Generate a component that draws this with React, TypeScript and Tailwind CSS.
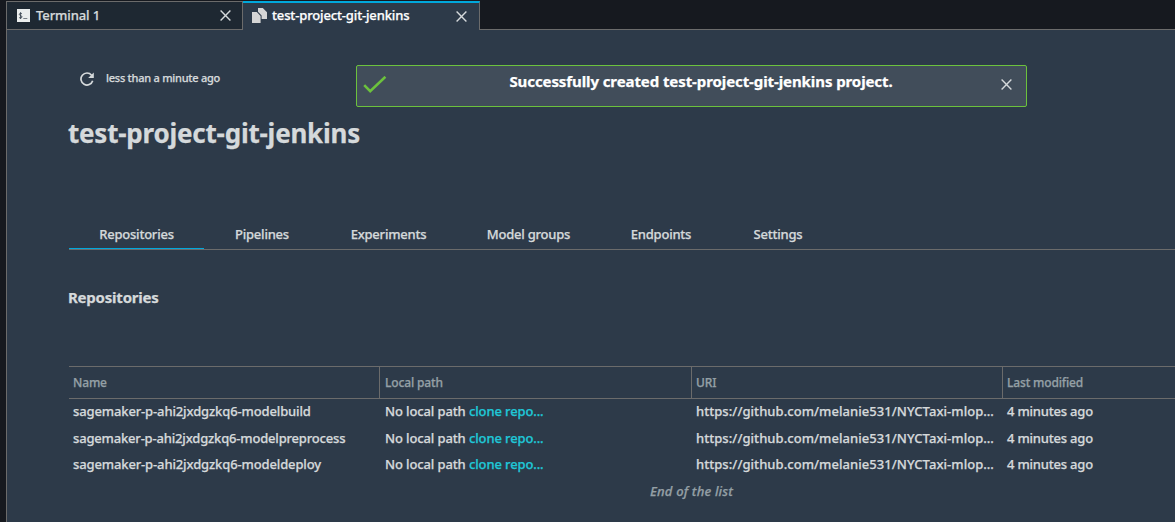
import type { ReactNode } from "react";

const tabs: { label: string; cls: string }[] = [
  { label: "Repositories", cls: "w-[135px] border-[#00a8dc]" },
  { label: "Pipelines", cls: "w-[116px] border-transparent" },
  { label: "Experiments", cls: "w-[137px] border-transparent" },
  { label: "Model groups", cls: "w-[143px] border-transparent" },
  { label: "Endpoints", cls: "w-[122px] border-transparent" },
  { label: "Settings", cls: "w-[112px] border-transparent" },
];

const repositories = [
  { name: "sagemaker-p-ahi2jxdgzkq6-modelbuild", height: "h-[25px]", nameTracking: "tracking-[-0.13px]" },
  { name: "sagemaker-p-ahi2jxdgzkq6-modelpreprocess", height: "h-[28px] pt-[2px]", nameTracking: "tracking-[-0.18px]" },
  { name: "sagemaker-p-ahi2jxdgzkq6-modeldeploy", height: "h-[25px]", nameTracking: "tracking-[-0.13px]" },
];

function CloseIcon({ className }: { className?: string }) {
  return (
    <svg viewBox="0 0 11 11" className={`size-[11px] shrink-0 ${className ?? ""}`} fill="none" stroke="#d5d9db" strokeWidth="1.4">
      <path d="M0.6 0.6 10.4 10.4M10.4 0.6 0.6 10.4" />
    </svg>
  );
}

function TerminalIcon() {
  return (
    <svg viewBox="0 0 13 13" className="size-[13px] shrink-0">
      <rect width="13" height="13" fill="#eaeded" />
      <path d="M5 4.9C4.6 4.2 2.3 4 2.3 5.4 2.3 6.8 5 6.3 5 7.9 5 9.3 2.4 9.1 2 8.3M3.6 3.2V10" fill="none" stroke="#37424e" strokeWidth="0.9" />
      <path d="M6.3 9.5H10.3" stroke="#6b737b" strokeWidth="0.9" />
    </svg>
  );
}

function ProjectIcon() {
  return (
    <svg viewBox="0 0 15 15" className="-mt-[2px] size-[15px] shrink-0" fill="#d5d5d5">
      <path d="M0 4H4.8L8.6 8V15H0Z" />
      <path d="M6 0H10.8L15 4.2V11H9.6V7.5L6 3.7Z" />
    </svg>
  );
}

function RefreshIcon() {
  return (
    <svg viewBox="0 0 14 14" className="mt-px size-[14px] shrink-0">
      <path d="M11.6 3.2A6 6 0 1 0 12.7 8.8" fill="none" stroke="#d5d9db" strokeWidth="1.7" />
      <path d="M13.8 0.4V6H8.2Z" fill="#d5d9db" />
    </svg>
  );
}

function HeaderCell({ children, className }: { children: ReactNode; className: string }) {
  return <div className={`flex h-[31px] items-center ${className}`}>{children}</div>;
}

export default function App() {
  return (
    <div className="flex h-[522px] w-[1175px] flex-col overflow-hidden bg-[#16191f] pl-[6px] font-['Noto_Sans','Open_Sans',sans-serif] text-[13px] font-medium text-[#d5d9db] [-webkit-text-stroke:0.25px]">
      <div className="flex h-[30px] shrink-0 pt-px">
        <div className="flex h-[29px] w-[237px] items-center border border-[#6b6b6b] bg-[#1e2832] pr-[11px] pl-[10px]">
          <TerminalIcon />
          <span className="ml-[6px] flex-1 whitespace-nowrap tracking-[-0.1px]">Terminal 1</span>
          <CloseIcon />
        </div>
        <div className="flex h-[29px] w-[237px] items-center border-t-2 border-r border-t-[#00a8dc] border-r-[#6b6b6b] bg-[#2d3a49] pr-[12px] pl-[9px]">
          <ProjectIcon />
          <span className="-mt-[2px] ml-[5px] flex-1 whitespace-nowrap tracking-[-0.14px] text-white">test-project-git-jenkins</span>
          <CloseIcon />
        </div>
        <div className="flex-1 border-b border-[#6b6b6b]" />
      </div>

      <main className="flex flex-1 flex-col border-l border-[#6b6b6b] bg-[#2d3a49]">
        <div className="flex h-[77px] items-start pt-[35px]">
          <div className="flex w-[349px] items-center pt-[5px] pl-[73px]">
            <RefreshIcon />
            <span className="ml-[12px] text-[11px] leading-4 tracking-[-0.25px] whitespace-nowrap">less than a minute ago</span>
          </div>
          <div className="flex h-[42px] w-[671px] items-start rounded-[2px] border border-[#6cc23d] bg-[#414d5a] pl-[6px]">
            <svg viewBox="0 0 24 18" className="mt-[10px] h-[18px] w-6 shrink-0" fill="none" stroke="#6cc23d" strokeWidth="2.6">
              <path d="M1.2 9.2 7.2 15.2 22.4 0.8" />
            </svg>
            <div className="mt-[4px] flex-1 pl-[14px] text-center text-[15px] leading-[22px] font-bold whitespace-nowrap text-white">
              <span className="tracking-[-0.09px]">Successfully created test-project-git-jenkins project.</span>
            </div>
            <CloseIcon className="mt-[13px] mr-[14px]" />
          </div>
        </div>

        <div className="flex flex-col pl-[62px]">
          <h1 className="-ml-px h-[110px] pt-[8px] text-[26px] leading-9 font-bold tracking-[-0.22px] whitespace-nowrap">test-project-git-jenkins</h1>

          <nav className="flex h-[33px] border-b border-[#6b6b6b] tracking-[-0.22px]">
            {tabs.map((tab) => (
              <div key={tab.label} className={`flex h-[32px] shrink-0 items-center justify-center border-b pt-[4px] whitespace-nowrap ${tab.cls}`}>
                {tab.label}
              </div>
            ))}
          </nav>

          <h2 className="-ml-px h-[116px] pt-[36px] text-[15px] leading-[22px] font-bold tracking-[-0.22px]">Repositories</h2>

          <div className="flex h-[33px] border-y border-[#6b6b6b] text-[12px] tracking-[-0.15px] text-[#95a0a6]">
            <HeaderCell className="w-[310px] pl-[4px]">Name</HeaderCell>
            <HeaderCell className="w-[312px] border-l border-[#6b6b6b] pl-[5px]">Local path</HeaderCell>
            <HeaderCell className="w-[311px] border-l border-[#6b6b6b] pl-[4px]">URI</HeaderCell>
            <HeaderCell className="flex-1 border-l border-[#6b6b6b] pl-[4px]">Last modified</HeaderCell>
          </div>
          {repositories.map((repo) => (
            <div key={repo.name} className={`flex items-center whitespace-nowrap ${repo.height}`}>
              <div className={`w-[311px] pl-[4px] ${repo.nameTracking}`}>{repo.name}</div>
              <div className="w-[312px] pl-[5px] tracking-[-0.12px]">
                No local path <span className="text-[#1fc8d8]">clone repo...</span>
              </div>
              <div className="w-[311px] pl-[4px] tracking-[0.05px]">https://github.com/melanie531/NYCTaxi-mlop…</div>
              <div className="flex-1 pl-[4px] tracking-[-0.2px]">4 minutes ago</div>
            </div>
          ))}
          <div className="flex h-[28px] items-center pt-[2px] pl-[581px] text-[13px] tracking-[0.19px] whitespace-nowrap text-[#95a0a6] italic">End of the list</div>
        </div>
      </main>
    </div>
  );
}
